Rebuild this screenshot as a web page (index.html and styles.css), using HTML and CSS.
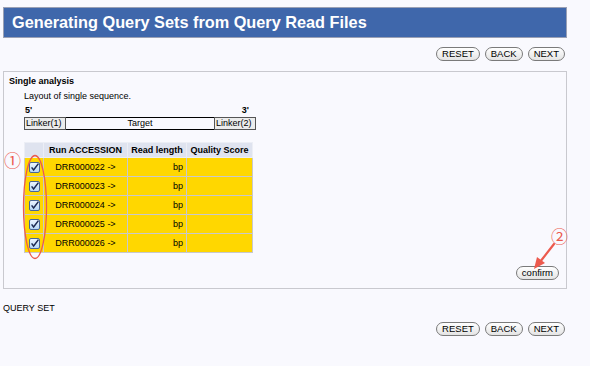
FILE: index.html
```html
<!DOCTYPE html>
<html lang="en">
<head>
  <meta charset="UTF-8">
  <title>Generating Query Sets from Query Read Files</title>
  <link rel="stylesheet" href="styles.css">
</head>
<body>
  <div class="page">
    <h1 class="title">Generating Query Sets from Query Read Files</h1>

    <div class="nav">
      <button class="pill">RESET</button>
      <button class="pill">BACK</button>
      <button class="pill">NEXT</button>
    </div>

    <div class="panel">
      <h2 class="panel-title">Single analysis</h2>
      <p class="note">Layout of single sequence.</p>

      <div class="layout">
        <div class="ends"><span>5'</span><span>3'</span></div>
        <table class="linker">
          <tr>
            <td class="lk">Linker(1)</td>
            <td class="target">Target</td>
            <td class="lk">Linker(2)</td>
          </tr>
        </table>
      </div>

      <table class="runs">
        <colgroup>
          <col class="w-check">
          <col class="w-acc">
          <col class="w-len">
          <col class="w-qual">
        </colgroup>
        <thead>
          <tr>
            <th></th>
            <th>Run ACCESSION</th>
            <th>Read length</th>
            <th>Quality Score</th>
          </tr>
        </thead>
        <tbody>
          <tr><td class="c-check"><span class="box"></span></td><td class="c-acc">DRR000022 -&gt;</td><td class="c-len">bp</td><td></td></tr>
          <tr><td class="c-check"><span class="box"></span></td><td class="c-acc">DRR000023 -&gt;</td><td class="c-len">bp</td><td></td></tr>
          <tr><td class="c-check"><span class="box"></span></td><td class="c-acc">DRR000024 -&gt;</td><td class="c-len">bp</td><td></td></tr>
          <tr><td class="c-check"><span class="box"></span></td><td class="c-acc">DRR000025 -&gt;</td><td class="c-len">bp</td><td></td></tr>
          <tr><td class="c-check"><span class="box"></span></td><td class="c-acc">DRR000026 -&gt;</td><td class="c-len">bp</td><td></td></tr>
        </tbody>
      </table>

      <div class="confirm-row">
        <button class="pill">confirm</button>
      </div>
    </div>

    <p class="query">QUERY SET</p>

    <div class="nav nav-bottom">
      <button class="pill">RESET</button>
      <button class="pill">BACK</button>
      <button class="pill">NEXT</button>
    </div>

    <!-- annotation marks drawn over the screenshot -->
    <span class="mark mark-1">①</span>
    <svg class="ring" width="26" height="106" viewBox="0 0 26 106">
      <ellipse cx="13" cy="53" rx="11.5" ry="51.5" fill="none" stroke="#ec5a4e" stroke-width="1.3"/>
    </svg>
    <span class="mark mark-2">②</span>
    <svg class="arrow" width="26" height="28" viewBox="0 0 26 28">
      <line x1="22" y1="2" x2="8" y2="20" stroke="#ec5a4e" stroke-width="2.2" stroke-linecap="round"/>
      <polygon points="2,27 5,15 13,21" fill="#ec5a4e"/>
    </svg>
  </div>

  <script>
    // draw the checked boxes
    var tick = '<svg width="11" height="11" viewBox="0 0 11 11">' +
      '<defs><linearGradient id="g" x1="0" y1="0" x2="0" y2="1">' +
      '<stop offset="0" stop-color="#eef6ff"/><stop offset="1" stop-color="#b4d6f6"/></linearGradient></defs>' +
      '<rect x="0.5" y="0.5" width="10" height="10" rx="1.5" fill="url(#g)" stroke="#4a6796"/>' +
      '<path d="M2.6 5.4 L4.6 8 L9.4 1.6" fill="none" stroke="#1c2a52" stroke-width="1.5"/></svg>';
    document.querySelectorAll('.box').forEach(function (b) { b.innerHTML = tick; });
  </script>
</body>
</html>
```

FILE: styles.css
```css
body {
  margin: 0;
  background: #f9f9fe;
  font-family: "Liberation Sans", Arial, sans-serif;
  color: #000;
}
.page {
  position: relative;
  width: 564px;
  padding: 7px 0 0 3px;
}
.title {
  margin: 0;
  height: 29px;
  line-height: 29px;
  padding-left: 8px;
  background: #3f67ab;
  border: 1px solid #9aa0b4;
  color: #fff;
  font-size: 16.3px;
  font-weight: bold;
}
.nav {
  display: flex;
  justify-content: flex-end;
  gap: 5px;
  padding-right: 2px;
  margin-top: 9px;
}
.nav-bottom {
  margin-top: 7px;
}
.pill {
  height: 14px;
  padding: 0 5px;
  border: 1px solid #7a7a7a;
  border-radius: 7px;
  background: linear-gradient(#ffffff, #e4e4e4);
  font-family: "Liberation Sans", Arial, sans-serif;
  font-size: 9.5px;
  line-height: 12px;
  color: #000;
}
.panel {
  margin-top: 10px;
  border: 1px solid #c9c9cf;
  padding: 3px 0 8px 0;
}
.panel-title {
  margin: 0 0 0 5px;
  font-size: 9px;
  line-height: 13px;
}
.note {
  margin: 2px 0 0 20px;
  font-size: 9px;
  line-height: 13px;
}
.layout {
  width: 232px;
  margin: 1px 0 0 20px;
}
.ends {
  display: flex;
  justify-content: space-between;
  padding: 0 7px 0 1px;
  font-size: 9px;
  font-weight: bold;
  line-height: 13px;
}
.linker {
  width: 232px;
  border-collapse: collapse;
  border: 1px solid #000;
  font-size: 9px;
}
.linker td {
  height: 11px;
  padding: 0 1px;
  line-height: 11px;
}
.lk {
  width: 38px;
  background: #ececec;
  border: 1px solid #555;
}
.target {
  text-align: center;
}
.runs {
  width: 228px;
  table-layout: fixed;
  margin: 12px 0 0 20px;
  border-collapse: collapse;
  font-size: 9px;
}
.w-check { width: 19px; }
.w-acc { width: 84px; }
.w-len { width: 59px; }
.w-qual { width: 66px; }
.runs th,
.runs td {
  border: 1px solid #c8c8cc;
  padding: 0 3px;
  white-space: nowrap;
}
.runs th {
  height: 14px;
  background: #dfe3ef;
  border-color: #eceef5;
  font-weight: bold;
}
.runs td {
  height: 18px;
  background: #ffd700;
}
.c-check {
  text-align: center;
}
.c-acc {
  text-align: center;
}
.c-len {
  text-align: right;
}
.box {
  display: inline-block;
  width: 11px;
  height: 11px;
  vertical-align: middle;
}
.box svg {
  display: block;
}
.confirm-row {
  display: flex;
  justify-content: flex-end;
  margin-top: 13px;
  padding-right: 7px;
}
.query {
  margin: 13px 0 0 0;
  font-size: 9px;
  line-height: 13px;
}
.mark {
  position: absolute;
  color: #ec5a4e;
  font-family: "Noto Sans CJK JP", "DejaVu Sans", sans-serif;
  font-size: 17px;
  line-height: 17px;
}
.mark-1 {
  left: 4px;
  top: 151px;
}
.mark-2 {
  left: 551px;
  top: 227px;
}
.ring {
  position: absolute;
  left: 22px;
  top: 154px;
}
.arrow {
  position: absolute;
  left: 532px;
  top: 242px;
}
```
